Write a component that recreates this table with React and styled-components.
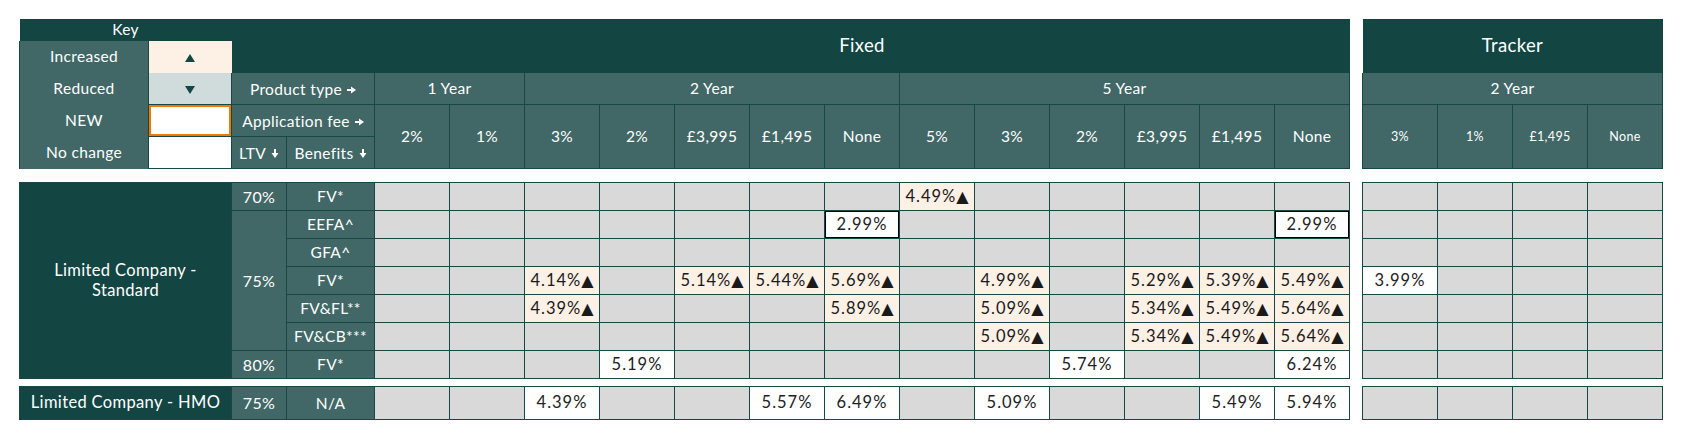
import React from 'react';
import styled, { createGlobalStyle, css } from 'styled-components';

const DARK = '#134543';
const TEAL = '#416866';
const LINE = '#174845';

const GlobalStyle = createGlobalStyle`
  html, body {
    margin: 0;
    padding: 0;
    background: #fff;
  }
  body {
    font-family: Lato, 'DejaVu Sans', sans-serif;
  }
`;

/** Whole page: the main sheet and the tracker sheet side by side */
const Page = styled.div`
  display: flex;
  gap: 13px;
  padding: 18px 0 0 19px;
`;

/** A vertical stack of header, body and HMO tables */
const Stack = styled.div`
  display: flex;
  flex-direction: column;
  width: ${(p) => p.$width}px;
`;

const Sheet = styled.table`
  width: ${(p) => p.$width}px;
  border-collapse: collapse;
  table-layout: fixed;
  margin-bottom: ${(p) => p.$gap || 0}px;
`;

const tones = {
  dark: css`
    background: ${DARK};
    color: #fff;
  `,
  teal: css`
    background: ${TEAL};
    color: #fff;
  `,
  grey: css`
    background: #d9d9d9;
    color: #222;
  `,
  white: css`
    background: #fff;
    color: #222;
  `,
  up: css`
    background: #fdf0e5;
    color: #1a1a1a;
  `,
  down: css`
    background: #d0dcdc;
    color: ${DARK};
  `,
  new: css`
    background: #fff;
    box-shadow: inset 0 0 0 2px #ee7b00;
  `,
};

/** Every cell of the sheet */
const Cell = styled.td`
  box-sizing: border-box;
  padding: 0;
  height: ${(p) => p.$h}px;
  border: 1px solid ${(p) => (p.$noLine ? 'transparent' : LINE)};
  text-align: center;
  vertical-align: middle;
  white-space: nowrap;
  font-size: ${(p) => p.$size || 15.5}px;
  letter-spacing: ${(p) => (p.$spaced ? '1px' : '0.35px')};
  line-height: 1.2;
  ${(p) => tones[p.$tone || 'grey']};
  ${(p) =>
    p.$boxed &&
    css`
      box-shadow: inset 0 0 0 1px #000;
    `}
`;

/** Key labels have no lines between them */
const KeyLabel = styled(Cell)`
  border-top: none;
  border-bottom: none;
`;

const Tri = styled.span`
  font-family: 'DejaVu Sans', sans-serif;
  font-size: 16px;
  letter-spacing: 0;
`;

const IconWrap = styled.span`
  display: inline-block;
  margin-left: 5px;
  vertical-align: 1px;
`;

const RightArrow = () => (
  <IconWrap>
    <svg width="9" height="8" viewBox="0 0 9 8">
      <path d="M0 4h5" stroke="#fff" strokeWidth="2" />
      <path d="M4 0.5L9 4 4 7.5z" fill="#fff" />
    </svg>
  </IconWrap>
);

const DownArrow = () => (
  <IconWrap>
    <svg width="8" height="9" viewBox="0 0 8 9">
      <path d="M4 0v5" stroke="#fff" strokeWidth="2" />
      <path d="M0.5 4L4 9 7.5 4z" fill="#fff" />
    </svg>
  </IconWrap>
);

const KeyMark = ({ up }) => (
  <svg width="10" height="8" viewBox="0 0 10 8">
    <path d={up ? 'M5 0L10 8H0z' : 'M0 0h10L5 8z'} fill={DARK} />
  </svg>
);

const fixedHeads = ['2%', '1%', '3%', '2%', '£3,995', '£1,495', 'None', '5%', '3%', '2%', '£3,995', '£1,495', 'None'];
const trackerHeads = ['3%', '1%', '£1,495', 'None'];

const _ = null;
const u = (v) => ({ v, tone: 'up' });
const w = (v) => ({ v, tone: 'white' });
const b = (v) => ({ v, tone: 'white', boxed: true });
const blank = (n) => Array(n).fill(_);

const standardRows = [
  { ltv: '70%', span: 1, benefit: 'FV*', fixed: [_, _, _, _, _, _, _, u('4.49%'), _, _, _, _, _], tracker: blank(4) },
  { ltv: '75%', span: 5, benefit: 'EEFA^', fixed: [_, _, _, _, _, _, b('2.99%'), _, _, _, _, _, b('2.99%')], tracker: blank(4) },
  { benefit: 'GFA^', fixed: blank(13), tracker: blank(4) },
  {
    benefit: 'FV*',
    fixed: [_, _, u('4.14%'), _, u('5.14%'), u('5.44%'), u('5.69%'), _, u('4.99%'), _, u('5.29%'), u('5.39%'), u('5.49%')],
    tracker: [w('3.99%'), _, _, _],
  },
  {
    benefit: 'FV&FL**',
    fixed: [_, _, u('4.39%'), _, _, _, u('5.89%'), _, u('5.09%'), _, u('5.34%'), u('5.49%'), u('5.64%')],
    tracker: blank(4),
  },
  {
    benefit: 'FV&CB***',
    fixed: [_, _, _, _, _, _, _, _, u('5.09%'), _, u('5.34%'), u('5.49%'), u('5.64%')],
    tracker: blank(4),
  },
  { ltv: '80%', span: 1, benefit: 'FV*', fixed: [_, _, _, w('5.19%'), _, _, _, _, _, w('5.74%'), _, _, w('6.24%')], tracker: blank(4) },
];

const hmoRow = {
  fixed: [_, _, w('4.39%'), _, _, w('5.57%'), w('6.49%'), _, w('5.09%'), _, _, w('5.49%'), w('5.94%')],
  tracker: blank(4),
};

const RateCell = ({ cell, h }) =>
  cell ? (
    <Cell $h={h} $tone={cell.tone} $boxed={cell.boxed} $size={16.5} $spaced>
      {cell.v}
      {cell.tone === 'up' && <Tri>▲</Tri>}
    </Cell>
  ) : (
    <Cell $h={h} $tone="grey" />
  );

const MainCols = () => (
  <colgroup>
    <col style={{ width: 129 }} />
    <col style={{ width: 83 }} />
    <col style={{ width: 55 }} />
    <col style={{ width: 88 }} />
    {fixedHeads.map((_, i) => (
      <col key={i} style={{ width: 75 }} />
    ))}
  </colgroup>
);

const TrackerCols = () => (
  <colgroup>
    {trackerHeads.map((_, i) => (
      <col key={i} style={{ width: 75 }} />
    ))}
  </colgroup>
);

const MainHeader = () => (
  <Sheet $width={1330} $gap={13}>
    <MainCols />
    <tbody>
      <tr>
        <Cell $h={22} $tone="dark" colSpan={2} $noLine>
          Key
        </Cell>
        <Cell $tone="dark" colSpan={2} rowSpan={2} $noLine />
        <Cell $tone="dark" colSpan={13} rowSpan={2} $size={18.5} $noLine>
          Fixed
        </Cell>
      </tr>
      <tr>
        <KeyLabel $h={32} $tone="teal">Increased</KeyLabel>
        <Cell $h={32} $tone="up" $noLine>
          <KeyMark up />
        </Cell>
      </tr>
      <tr>
        <KeyLabel $h={32} $tone="teal">Reduced</KeyLabel>
        <Cell $h={32} $tone="down">
          <KeyMark />
        </Cell>
        <Cell $tone="teal" colSpan={2}>
          Product type
          <RightArrow />
        </Cell>
        <Cell $tone="teal" colSpan={2}>1 Year</Cell>
        <Cell $tone="teal" colSpan={5}>2 Year</Cell>
        <Cell $tone="teal" colSpan={6}>5 Year</Cell>
      </tr>
      <tr>
        <KeyLabel $h={32} $tone="teal">NEW</KeyLabel>
        <Cell $h={32} $tone="new" />
        <Cell $tone="teal" colSpan={2}>
          Application fee
          <RightArrow />
        </Cell>
        {fixedHeads.map((t, i) => (
          <Cell key={i} $tone="teal" rowSpan={2}>
            {t}
          </Cell>
        ))}
      </tr>
      <tr>
        <KeyLabel $h={32} $tone="teal">No change</KeyLabel>
        <Cell $h={32} $tone="white" />
        <Cell $tone="teal">
          LTV
          <DownArrow />
        </Cell>
        <Cell $tone="teal">
          Benefits
          <DownArrow />
        </Cell>
      </tr>
    </tbody>
  </Sheet>
);

const TrackerHeader = () => (
  <Sheet $width={300} $gap={13}>
    <TrackerCols />
    <tbody>
      <tr>
        <Cell $h={54} $tone="dark" colSpan={4} $size={18.5} $noLine>
          Tracker
        </Cell>
      </tr>
      <tr>
        <Cell $h={32} $tone="teal" colSpan={4}>
          2 Year
        </Cell>
      </tr>
      <tr>
        {trackerHeads.map((t, i) => (
          <Cell key={i} $h={64} $tone="teal" $size={12.5}>
            {t}
          </Cell>
        ))}
      </tr>
    </tbody>
  </Sheet>
);

const MainBody = () => (
  <Sheet $width={1330} $gap={7}>
    <MainCols />
    <tbody>
      {standardRows.map((row, r) => (
        <tr key={r}>
          {r === 0 && (
            <Cell $tone="dark" colSpan={2} rowSpan={7} $size={16.5}>
              Limited Company -
              <br />
              Standard
            </Cell>
          )}
          {row.ltv && (
            <Cell $tone="teal" rowSpan={row.span} $size={16}>
              {row.ltv}
            </Cell>
          )}
          <Cell $h={28} $tone="teal">
            {row.benefit}
          </Cell>
          {row.fixed.map((c, i) => (
            <RateCell key={i} cell={c} h={28} />
          ))}
        </tr>
      ))}
    </tbody>
  </Sheet>
);

const TrackerBody = () => (
  <Sheet $width={300} $gap={7}>
    <TrackerCols />
    <tbody>
      {standardRows.map((row, r) => (
        <tr key={r}>
          {row.tracker.map((c, i) => (
            <RateCell key={i} cell={c} h={28} />
          ))}
        </tr>
      ))}
    </tbody>
  </Sheet>
);

const MainHmo = () => (
  <Sheet $width={1330}>
    <MainCols />
    <tbody>
      <tr>
        <Cell $h={33} $tone="dark" colSpan={2} $size={16.5}>
          Limited Company - HMO
        </Cell>
        <Cell $tone="teal" $size={16}>75%</Cell>
        <Cell $tone="teal">N/A</Cell>
        {hmoRow.fixed.map((c, i) => (
          <RateCell key={i} cell={c} h={33} />
        ))}
      </tr>
    </tbody>
  </Sheet>
);

const TrackerHmo = () => (
  <Sheet $width={300}>
    <TrackerCols />
    <tbody>
      <tr>
        {hmoRow.tracker.map((c, i) => (
          <RateCell key={i} cell={c} h={33} />
        ))}
      </tr>
    </tbody>
  </Sheet>
);

export default function App() {
  return (
    <>
      <GlobalStyle />
      <Page>
        <Stack $width={1330}>
          <MainHeader />
          <MainBody />
          <MainHmo />
        </Stack>
        <Stack $width={300}>
          <TrackerHeader />
          <TrackerBody />
          <TrackerHmo />
        </Stack>
      </Page>
    </>
  );
}
